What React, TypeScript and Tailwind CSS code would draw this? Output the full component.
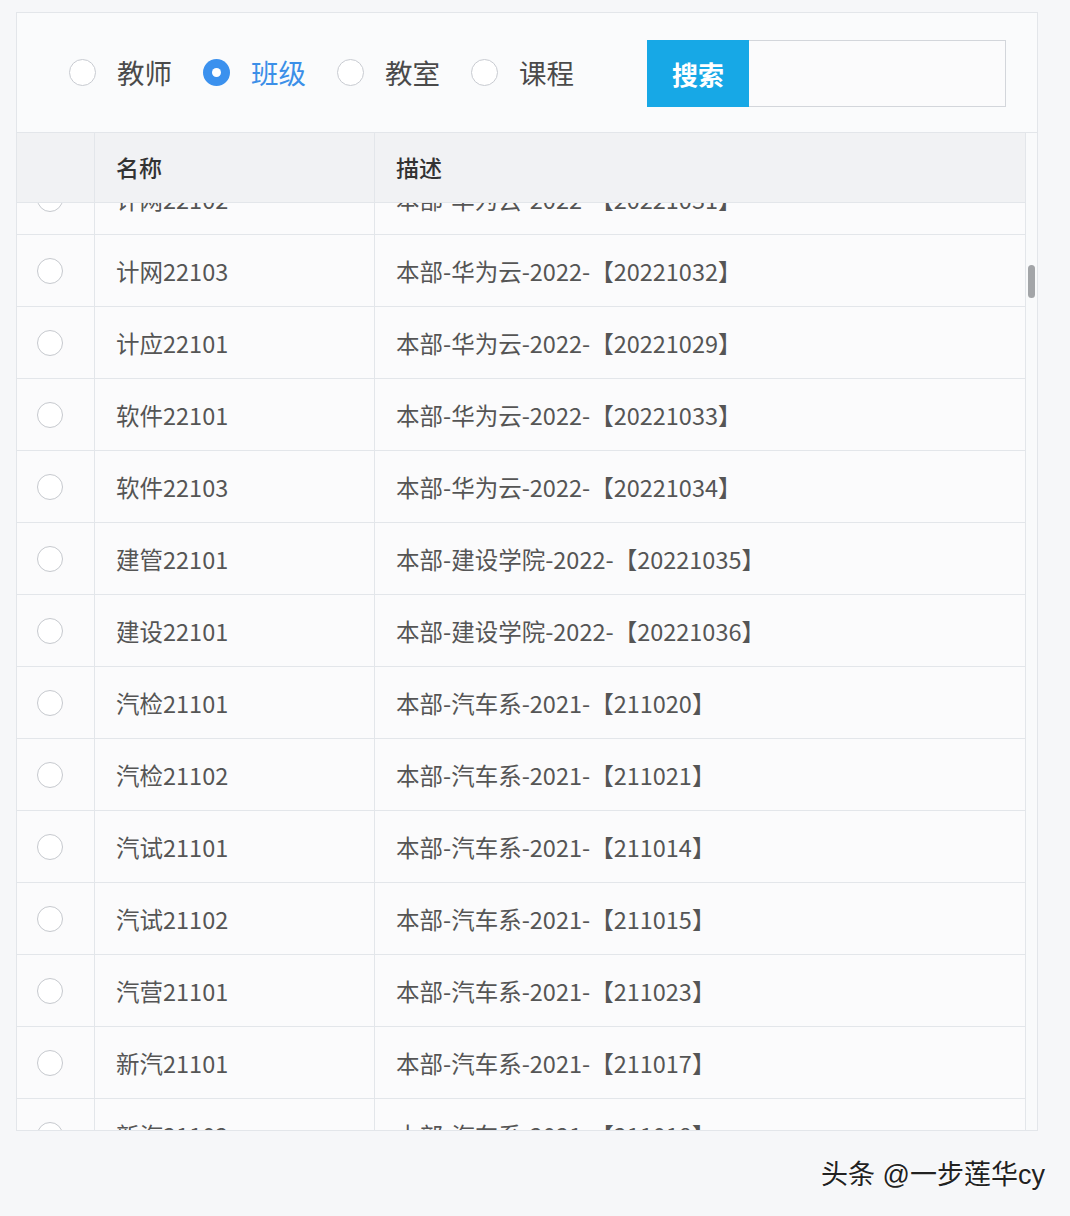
import React from "react";

const rows: [string, string][] = [
  ["计网22102", "本部-华为云-2022-【20221031】"],
  ["计网22103", "本部-华为云-2022-【20221032】"],
  ["计应22101", "本部-华为云-2022-【20221029】"],
  ["软件22101", "本部-华为云-2022-【20221033】"],
  ["软件22103", "本部-华为云-2022-【20221034】"],
  ["建管22101", "本部-建设学院-2022-【20221035】"],
  ["建设22101", "本部-建设学院-2022-【20221036】"],
  ["汽检21101", "本部-汽车系-2021-【211020】"],
  ["汽检21102", "本部-汽车系-2021-【211021】"],
  ["汽试21101", "本部-汽车系-2021-【211014】"],
  ["汽试21102", "本部-汽车系-2021-【211015】"],
  ["汽营21101", "本部-汽车系-2021-【211023】"],
  ["新汽21101", "本部-汽车系-2021-【211017】"],
  ["新汽21102", "本部-汽车系-2021-【211018】"],
];

const font = { fontFamily: '"Noto Sans CJK SC", "Noto Sans", sans-serif' };

function Radio({ label, checked }: { label: string; checked?: boolean }) {
  return (
    <div className="flex items-center">
      {checked ? (
        <span className="w-[27px] h-[27px] rounded-full bg-[#3b91ee] flex items-center justify-center">
          <span className="w-[9px] h-[9px] rounded-full bg-white" />
        </span>
      ) : (
        <span className="w-[27px] h-[27px] rounded-full border border-[#c8cbd1] bg-white" />
      )}
      <span
        className={`ml-[21px] text-[27.5px] leading-none ${checked ? "text-[#3b8fe8]" : "text-[#4a4a4a]"}`}
      >
        {label}
      </span>
    </div>
  );
}

export default function App() {
  return (
    <div className="w-[1070px] h-[1216px] bg-[#f6f7f9] pt-[12px] relative" style={font}>
      <div className="ml-[16px] w-[1022px] border border-[#e3e6ea] bg-[#fafbfc]">
        <div className="h-[120px] flex items-center pl-[52px] border-b border-[#e3e6ea]">
          <div className="flex items-center gap-[31px]">
            <Radio label="教师" />
            <Radio label="班级" checked />
            <Radio label="教室" />
            <Radio label="课程" />
          </div>
          <div className="ml-[73px] flex h-[67px] mt-[2px]">
            <div className="w-[102px] h-full bg-[#17a8e6] text-white font-bold text-[26px] flex items-center justify-center">
              搜索
            </div>
            <div className="w-[257px] h-full border border-[#d3d6db] border-l-0 bg-[#fbfbfc]" />
          </div>
        </div>
        <div className="flex">
          <div className="w-[1008px]">
            <div className="flex h-[70px] bg-[#f1f2f4] border-b border-[#e3e6ea]">
              <div className="w-[78px] border-r border-[#e3e6ea]" />
              <div className="w-[280px] border-r border-[#e3e6ea] flex items-center pl-[21px] text-[23px] text-[#333] font-medium">
                名称
              </div>
              <div className="flex-1 flex items-center pl-[21px] text-[23px] text-[#333] font-medium">
                描述
              </div>
            </div>
            <div className="h-[927px] overflow-hidden">
              <div className="-mt-[40px]">
                {rows.map(([name, desc], i) => (
                  <div key={i} className="flex h-[72px] border-b border-[#e3e6ea] bg-[#fbfbfc]">
                    <div className="w-[78px] border-r border-[#e3e6ea] flex items-center pl-[20px]">
                      <span className="w-[26px] h-[26px] rounded-full border-[1.5px] border-[#c6c9ce] bg-white" />
                    </div>
                    <div className="w-[280px] border-r border-[#e3e6ea] flex items-center pl-[21px] pt-[2px] text-[23.5px] text-[#555]">
                      {name}
                    </div>
                    <div className="flex-1 flex items-center pl-[21px] pt-[2px] text-[23.5px] text-[#555]">
                      {desc}
                    </div>
                  </div>
                ))}
              </div>
            </div>
          </div>
          <div className="flex-1 border-l border-[#e3e6ea] bg-[#f9fafb] pt-[132px] flex justify-center">
            <div className="w-[7px] h-[33px] rounded-full bg-[#a3a5a8]" />
          </div>
        </div>
      </div>
      <div
        className="absolute right-[25px] top-[1162px] text-[27px] text-[#222] leading-none"
        style={{ fontFamily: '"Liberation Sans", "Noto Sans CJK SC", sans-serif', textShadow: "0 0 2px #fff, 0 0 2px #fff" }}
      >
        头条 @一步莲华cy
      </div>
    </div>
  );
}
